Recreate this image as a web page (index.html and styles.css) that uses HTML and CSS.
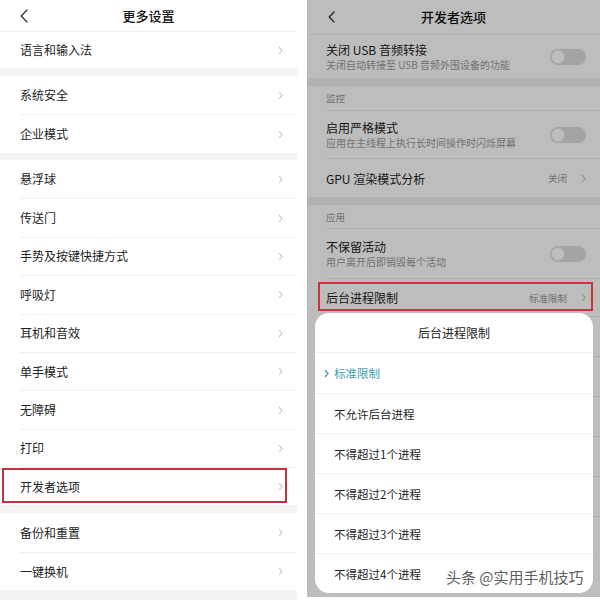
FILE: index.html
```html
<!DOCTYPE html>
<html lang="zh-CN">
<head>
<meta charset="utf-8">
<title>设置</title>
<link rel="stylesheet" href="styles.css">
</head>
<body>
<div class="page">
  <section class="screen left">
    <header class="bar">
      <span class="back"><svg width="8" height="14" viewBox="0 0 8 14"><polyline points="7,1 1.2,7 7,13"/></svg></span>
      <h1>更多设置</h1>
      <span></span>
    </header>
    <div class="group g-first">
      <div class="row">语言和输入法<svg class="chev" viewBox="0 0 5 9"><polyline points="1,1 4,4.5 1,8"/></svg></div>
    </div>
    <div class="band b1"></div>
    <div class="group">
      <div class="row">系统安全<svg class="chev" viewBox="0 0 5 9"><polyline points="1,1 4,4.5 1,8"/></svg></div>
      <div class="row">企业模式<svg class="chev" viewBox="0 0 5 9"><polyline points="1,1 4,4.5 1,8"/></svg></div>
    </div>
    <div class="band b2"></div>
    <div class="group">
      <div class="row">悬浮球<svg class="chev" viewBox="0 0 5 9"><polyline points="1,1 4,4.5 1,8"/></svg></div>
      <div class="row">传送门<svg class="chev" viewBox="0 0 5 9"><polyline points="1,1 4,4.5 1,8"/></svg></div>
      <div class="row">手势及按键快捷方式<svg class="chev" viewBox="0 0 5 9"><polyline points="1,1 4,4.5 1,8"/></svg></div>
      <div class="row">呼吸灯<svg class="chev" viewBox="0 0 5 9"><polyline points="1,1 4,4.5 1,8"/></svg></div>
      <div class="row">耳机和音效<svg class="chev" viewBox="0 0 5 9"><polyline points="1,1 4,4.5 1,8"/></svg></div>
      <div class="row">单手模式<svg class="chev" viewBox="0 0 5 9"><polyline points="1,1 4,4.5 1,8"/></svg></div>
      <div class="row">无障碍<svg class="chev" viewBox="0 0 5 9"><polyline points="1,1 4,4.5 1,8"/></svg></div>
      <div class="row">打印<svg class="chev" viewBox="0 0 5 9"><polyline points="1,1 4,4.5 1,8"/></svg></div>
      <div class="row marked">开发者选项<svg class="chev" viewBox="0 0 5 9"><polyline points="1,1 4,4.5 1,8"/></svg><span class="hl hl-left"></span></div>
    </div>
    <div class="band b1"></div>
    <div class="group">
      <div class="row">备份和重置<svg class="chev" viewBox="0 0 5 9"><polyline points="1,1 4,4.5 1,8"/></svg></div>
      <div class="row">一键换机<svg class="chev" viewBox="0 0 5 9"><polyline points="1,1 4,4.5 1,8"/></svg></div>
    </div>
    <div class="band tail"></div>
  </section>

  <section class="screen right">
    <header class="bar">
      <span class="back"><svg width="7" height="12" viewBox="0 0 7 12"><polyline points="6,1 1.2,6 6,11"/></svg></span>
      <h1>开发者选项</h1>
      <span></span>
    </header>
    <div class="group">
      <div class="item h-usb">
        <div class="txt"><div class="t">关闭 USB 音频转接</div><div class="s">关闭自动转接至 USB 音频外围设备的功能</div></div>
        <span class="sw"><span class="knob"></span></span>
      </div>
    </div>
    <div class="band rb"></div>
    <div class="group">
      <div class="label h-l1">监控</div>
      <div class="item h-strict">
        <div class="txt"><div class="t">启用严格模式</div><div class="s">应用在主线程上执行长时间操作时闪烁屏幕</div></div>
        <span class="sw"><span class="knob"></span></span>
      </div>
      <div class="item h-gpu">
        <div class="t">GPU 渲染模式分析</div>
        <div class="val">关闭<svg class="chev" viewBox="0 0 5 9"><polyline points="1,1 4,4.5 1,8"/></svg></div>
      </div>
    </div>
    <div class="band rb"></div>
    <div class="group grow">
      <div class="label h-l2">应用</div>
      <div class="item h-keep">
        <div class="txt"><div class="t">不保留活动</div><div class="s">用户离开后即销毁每个活动</div></div>
        <span class="sw"><span class="knob"></span></span>
      </div>
      <div class="item h-bg">
        <div class="t">后台进程限制</div>
        <div class="val">标准限制<svg class="chev" viewBox="0 0 5 9"><polyline points="1,1 4,4.5 1,8"/></svg></div>
        <span class="hl hl-right"></span>
      </div>
      <div class="item h-more"></div>
      <div class="item h-more"></div>
      <div class="item h-more"></div>
      <div class="item h-more"></div>
      <div class="item h-more"></div>
      <div class="item h-more"></div>
    </div>

    <div class="dim"></div>

    <div class="sheet">
      <h2>后台进程限制</h2>
      <div class="opt on"><span class="mark"><svg width="5" height="9" viewBox="0 0 5 9"><polyline points="1,1 4,4.5 1,8"/></svg></span>标准限制</div>
      <div class="opt"><span class="mark"></span>不允许后台进程</div>
      <div class="opt"><span class="mark"></span>不得超过1个进程</div>
      <div class="opt"><span class="mark"></span>不得超过2个进程</div>
      <div class="opt"><span class="mark"></span>不得超过3个进程</div>
      <div class="opt"><span class="mark"></span>不得超过4个进程</div>
    </div>

    <div class="watermark">头条 @实用手机技巧</div>
  </section>
</div>
</body>
</html>
```

FILE: styles.css
```css
* {
  box-sizing: border-box;
  margin: 0;
  padding: 0;
}

body {
  margin: 0;
  width: 600px;
  height: 600px;
  overflow: hidden;
  background: #ffffff;
  font-family: "Noto Sans CJK SC", "Noto Sans", "Liberation Sans", sans-serif;
  color: #222222;
}

.page {
  display: flex;
  gap: 10px;
  width: 600px;
  height: 600px;
}

.screen {
  flex: none;
  display: flex;
  flex-direction: column;
}

/* ---------- header bar ---------- */
.bar {
  display: grid;
  grid-template-columns: 60px 1fr 60px;
  align-items: center;
  background: #ffffff;
  border-bottom: 1px solid #f0f0f0;
}

.bar h1 {
  font-size: 13px;
  font-weight: 500;
  text-align: center;
  color: #111111;
  line-height: 16px;
}

.back {
  display: flex;
  align-items: center;
}

.back polyline {
  fill: none;
  stroke: #333333;
  stroke-width: 1.3;
  stroke-linecap: round;
  stroke-linejoin: round;
}

.chev {
  width: 5px;
  height: 9px;
  flex: none;
}

.chev polyline {
  fill: none;
  stroke: #c2c2c2;
  stroke-width: 1.1;
}

.band {
  background: #f3f3f3;
  flex: none;
}

.group {
  background: #ffffff;
}

/* ---------- left screen ---------- */
.left {
  width: 297px;
  height: 600px;
}

.left .bar {
  height: 32px;
}

.left .back {
  padding-left: 20px;
}

.left .row {
  margin-left: 20px;
  padding-right: 14px;
  height: 38.4px;
  display: flex;
  align-items: center;
  justify-content: space-between;
  font-size: 12px;
  line-height: 16px;
  color: #222222;
}

.left .row + .row {
  border-top: 1px solid #efefef;
}

.left .g-first .row {
  height: 36px;
}

.band.b1 {
  height: 8px;
}

.band.b2 {
  height: 7.2px;
}

.band.tail {
  flex: 1;
}

.marked {
  position: relative;
}

.hl {
  position: absolute;
  border: 2.5px solid #bd3440;
  pointer-events: none;
}

.hl-left {
  left: -18px;
  right: 10px;
  top: 0;
  height: 35px;
}

/* ---------- right screen ---------- */
.right {
  width: 293px;
  height: 597px;
  position: relative;
  overflow: hidden;
  background: #efefef;
}

.right .bar {
  height: 35px;
}

.right .back {
  padding-left: 21px;
}

.right .item {
  margin-left: 19px;
  padding-right: 14px;
  display: flex;
  align-items: center;
  justify-content: space-between;
  position: relative;
}

.right .item + .item,
.right .label + .item {
  border-top: 1px solid #ebebeb;
}

.right .t {
  font-size: 12px;
  line-height: 15px;
  color: #1c1c1c;
}

.right .s {
  font-size: 10px;
  line-height: 13px;
  color: #9a9a9a;
  margin-top: 1px;
}

.right .label {
  margin-left: 19px;
  display: flex;
  align-items: center;
  font-size: 9.5px;
  color: #9a9a9a;
}

.right .val {
  display: flex;
  align-items: center;
  gap: 14px;
  font-size: 9.5px;
  color: #9a9a9a;
}

.h-usb { height: 43px; }
.h-l1 { height: 24px; }
.h-strict { height: 48px; }
.h-gpu { height: 39px; }
.h-l2 { height: 23px; }
.h-keep { height: 50px; }
.h-bg { height: 38px; }
.h-more { height: 40px; }

.band.rb {
  height: 8px;
  background: #efefef;
}

.grow {
  flex: 1;
}

.sw {
  flex: none;
  width: 36px;
  height: 16px;
  border-radius: 8px;
  background: #dddddd;
  display: flex;
  align-items: center;
  padding-left: 1px;
}

.knob {
  width: 14px;
  height: 14px;
  border-radius: 50%;
  background: #ffffff;
  border: 1px solid #ececec;
}

.dim {
  position: absolute;
  inset: 0;
  background: rgba(0, 0, 0, 0.26);
  z-index: 1;
}

.hl-right {
  left: -8px;
  right: 7px;
  top: 3px;
  height: 29px;
  border-color: #c7333f;
  z-index: 3;
}

/* ---------- bottom sheet ---------- */
.sheet {
  position: absolute;
  left: 8px;
  right: 7px;
  top: 313px;
  height: 280px;
  background: #ffffff;
  border-radius: 14px;
  z-index: 2;
  display: flex;
  flex-direction: column;
  overflow: hidden;
}

.sheet h2 {
  height: 40px;
  flex: none;
  display: flex;
  align-items: center;
  justify-content: center;
  font-size: 12px;
  font-weight: normal;
  color: #222222;
  border-bottom: 1px solid #efefef;
}

.opt {
  height: 40px;
  flex: none;
  display: flex;
  align-items: center;
  padding-left: 9px;
  font-size: 11.5px;
  color: #222222;
}

.opt + .opt {
  border-top: 1px solid #efefef;
}

.mark {
  width: 10px;
  flex: none;
  display: flex;
  align-items: center;
}

.mark polyline {
  fill: none;
  stroke: #3f9cab;
  stroke-width: 1.3;
}

.opt.on {
  color: #3f9cab;
}

.watermark {
  position: absolute;
  left: 139px;
  top: 567px;
  z-index: 4;
  font-size: 15px;
  line-height: 20px;
  color: #5e5e5e;
  text-shadow: 0 0 2px #ffffff;
  white-space: nowrap;
}
```
